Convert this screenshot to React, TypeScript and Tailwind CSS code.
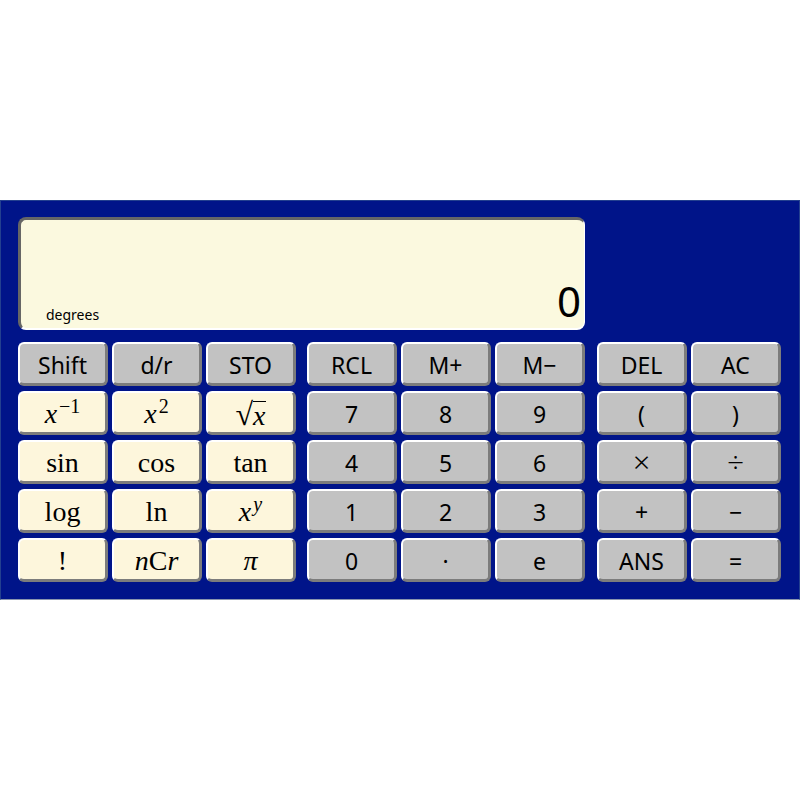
import React from 'react';

type Kind = 'gray' | 'cream';

const sans = { fontFamily: '"Noto Sans", "Open Sans", sans-serif' };
const serif = { fontFamily: '"Liberation Serif", "DejaVu Serif", serif' };

const Key: React.FC<{ kind: Kind; children: React.ReactNode }> = ({ kind, children }) => (
  <button
    className={
      'h-[44px] w-[90px] flex items-center justify-center rounded-[6px] border-t-2 border-l-2 border-t-white border-l-white border-b-[3px] border-r-[3px] border-b-[#7c7c7c] border-r-[#7c7c7c] text-black leading-none ' +
      (kind === 'gray' ? 'bg-[#c2c2c2] text-[23px] pt-[4px]' : 'bg-[#fdf6dc] text-[28px] pt-[3px]')
    }
    style={kind === 'gray' ? sans : serif}
  >
    {children}
  </button>
);

const Sup: React.FC<{ children: React.ReactNode }> = ({ children }) => (
  <span className="inline-block text-[20px] -translate-y-[10px] ml-[2px]">{children}</span>
);

const scientific: React.ReactNode[] = [
  'Shift', 'd/r', 'STO',
  <span key="inv"><i>x</i><Sup>−1</Sup></span>,
  <span key="sq"><i>x</i><Sup>2</Sup></span>,
  <span key="rt" className="flex items-end">
    <span className="text-[32px] leading-[30px]">√</span>
    <i className="border-t-[1.5px] border-black pt-[1px] leading-[26px]">x</i>
  </span>,
  'sin', 'cos', 'tan',
  'log', 'ln',
  <span key="pow"><i>x</i><Sup><i>y</i></Sup></span>,
  '!',
  <span key="ncr"><i>n</i>C<i>r</i></span>,
  <i key="pi">π</i>,
];

const numbers = ['RCL', 'M+', 'M−', '7', '8', '9', '4', '5', '6', '1', '2', '3', '0', '·', 'e'];

const ops: React.ReactNode[] = [
  'DEL', 'AC', '(', ')',
  <span key="mul" className="text-[30px] font-light leading-none -mt-[3px]">×</span>,
  <span key="div" className="text-[30px] font-light leading-none -mt-[3px]">÷</span>,
  '+', '−', 'ANS', '=',
];

export default function App() {
  return (
    <div className="h-[800px] w-[800px] bg-white flex items-center">
      <div className="w-full h-[400px] bg-[#001489] border border-[#23408f] border-b-[#8a96ae] pt-4 pl-[17px]">
        {/* display */}
        <div className="w-[567px] h-[113px] rounded-[8px] bg-[#fbf9df] border-t-[3px] border-l-[3px] border-t-[#666] border-l-[#666] border-b-2 border-r border-b-white border-r-white relative">
          <span className="absolute left-[25px] bottom-[3px] text-[14px] text-black" style={sans}>degrees</span>
          <span className="absolute right-[3px] bottom-[6px] text-[42px] leading-none text-black" style={sans}>0</span>
        </div>

        {/* keys */}
        <div className="flex mt-3">
          <div className="grid grid-cols-3 gap-x-1 gap-y-[5px]">
            {scientific.map((k, i) => (
              <Key key={i} kind={i < 3 ? 'gray' : 'cream'}>{k}</Key>
            ))}
          </div>
          <div className="grid grid-cols-3 gap-x-1 gap-y-[5px] ml-[11px]">
            {numbers.map((k, i) => (
              <Key key={i} kind="gray">{k}</Key>
            ))}
          </div>
          <div className="grid grid-cols-2 gap-x-1 gap-y-[5px] ml-3">
            {ops.map((k, i) => (
              <Key key={i} kind="gray">{k}</Key>
            ))}
          </div>
        </div>
      </div>
    </div>
  );
}
